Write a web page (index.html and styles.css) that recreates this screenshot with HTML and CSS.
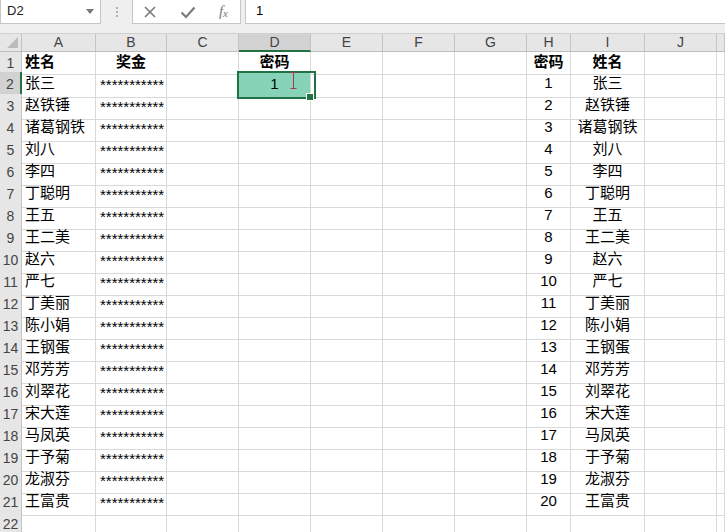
FILE: index.html
```html
<!DOCTYPE html>
<html>
	<head>
		<meta charset="UTF-8">
		<link rel="stylesheet" href="styles.css">
		<title>密码</title>
	</head>
	<body>
		<div class="topbar">
			<div class="formulabar">
				<div class="namebox">D2<span class="caret"></span></div>
				<div class="grip"><span></span><span></span><span></span></div>
				<div class="iconbox">
					<svg class="icon" width="14" height="14" viewBox="0 0 14 14"><path d="M2 2 L12 12 M12 2 L2 12" stroke="#7a7a7a" stroke-width="1.6" fill="none"/></svg>
					<svg class="icon" width="16" height="14" viewBox="0 0 16 14"><path d="M1.5 7.5 L6 12 L14.5 2.5" stroke="#7a7a7a" stroke-width="2.2" fill="none"/></svg>
					<span class="fx">f<sub>x</sub></span>
				</div>
				<div class="input">1</div>
			</div>
		</div>

		<div class="sheet">
			<div class="row head">
				<span class="corner"></span><span>A</span><span>B</span><span>C</span><span class="selcol">D</span><span>E</span><span>F</span><span>G</span><span>H</span><span>I</span><span>J</span><span></span>
			</div>
			<div class="row first">
				<span class="rh">1</span><span class="b">姓名</span><span class="b ctr">奖金</span><span></span><span class="b ctr">密码</span><span></span><span></span><span></span><span class="b ctr">密码</span><span class="b ctr">姓名</span><span></span><span></span>
			</div>
			<div class="row">
				<span class="rh selrow">2</span><span>张三</span><span class="stars">***********</span><span></span><span class="sel ctr">1<svg class="ibeam" width="7" height="17" viewBox="0 0 7 17"><path d="M0.5 0.5 H6.5 M3.5 0.5 V16.5 M0.5 16.5 H6.5" stroke="#a4385a" stroke-width="1" fill="none"/></svg></span><span></span><span></span><span></span><span class="ctr">1</span><span class="ctr">张三</span><span></span><span></span>
			</div>
			<div class="row"><span class="rh">3</span><span>赵铁锤</span><span class="stars">***********</span><span></span><span></span><span></span><span></span><span></span><span class="ctr">2</span><span class="ctr">赵铁锤</span><span></span><span></span></div>
			<div class="row"><span class="rh">4</span><span>诸葛钢铁</span><span class="stars">***********</span><span></span><span></span><span></span><span></span><span></span><span class="ctr">3</span><span class="ctr">诸葛钢铁</span><span></span><span></span></div>
			<div class="row"><span class="rh">5</span><span>刘八</span><span class="stars">***********</span><span></span><span></span><span></span><span></span><span></span><span class="ctr">4</span><span class="ctr">刘八</span><span></span><span></span></div>
			<div class="row"><span class="rh">6</span><span>李四</span><span class="stars">***********</span><span></span><span></span><span></span><span></span><span></span><span class="ctr">5</span><span class="ctr">李四</span><span></span><span></span></div>
			<div class="row"><span class="rh">7</span><span>丁聪明</span><span class="stars">***********</span><span></span><span></span><span></span><span></span><span></span><span class="ctr">6</span><span class="ctr">丁聪明</span><span></span><span></span></div>
			<div class="row"><span class="rh">8</span><span>王五</span><span class="stars">***********</span><span></span><span></span><span></span><span></span><span></span><span class="ctr">7</span><span class="ctr">王五</span><span></span><span></span></div>
			<div class="row"><span class="rh">9</span><span>王二美</span><span class="stars">***********</span><span></span><span></span><span></span><span></span><span></span><span class="ctr">8</span><span class="ctr">王二美</span><span></span><span></span></div>
			<div class="row"><span class="rh">10</span><span>赵六</span><span class="stars">***********</span><span></span><span></span><span></span><span></span><span></span><span class="ctr">9</span><span class="ctr">赵六</span><span></span><span></span></div>
			<div class="row"><span class="rh">11</span><span>严七</span><span class="stars">***********</span><span></span><span></span><span></span><span></span><span></span><span class="ctr">10</span><span class="ctr">严七</span><span></span><span></span></div>
			<div class="row"><span class="rh">12</span><span>丁美丽</span><span class="stars">***********</span><span></span><span></span><span></span><span></span><span></span><span class="ctr">11</span><span class="ctr">丁美丽</span><span></span><span></span></div>
			<div class="row"><span class="rh">13</span><span>陈小娟</span><span class="stars">***********</span><span></span><span></span><span></span><span></span><span></span><span class="ctr">12</span><span class="ctr">陈小娟</span><span></span><span></span></div>
			<div class="row"><span class="rh">14</span><span>王钢蛋</span><span class="stars">***********</span><span></span><span></span><span></span><span></span><span></span><span class="ctr">13</span><span class="ctr">王钢蛋</span><span></span><span></span></div>
			<div class="row"><span class="rh">15</span><span>邓芳芳</span><span class="stars">***********</span><span></span><span></span><span></span><span></span><span></span><span class="ctr">14</span><span class="ctr">邓芳芳</span><span></span><span></span></div>
			<div class="row"><span class="rh">16</span><span>刘翠花</span><span class="stars">***********</span><span></span><span></span><span></span><span></span><span></span><span class="ctr">15</span><span class="ctr">刘翠花</span><span></span><span></span></div>
			<div class="row"><span class="rh">17</span><span>宋大莲</span><span class="stars">***********</span><span></span><span></span><span></span><span></span><span></span><span class="ctr">16</span><span class="ctr">宋大莲</span><span></span><span></span></div>
			<div class="row"><span class="rh">18</span><span>马凤英</span><span class="stars">***********</span><span></span><span></span><span></span><span></span><span></span><span class="ctr">17</span><span class="ctr">马凤英</span><span></span><span></span></div>
			<div class="row"><span class="rh">19</span><span>于予菊</span><span class="stars">***********</span><span></span><span></span><span></span><span></span><span></span><span class="ctr">18</span><span class="ctr">于予菊</span><span></span><span></span></div>
			<div class="row"><span class="rh">20</span><span>龙淑芬</span><span class="stars">***********</span><span></span><span></span><span></span><span></span><span></span><span class="ctr">19</span><span class="ctr">龙淑芬</span><span></span><span></span></div>
			<div class="row"><span class="rh">21</span><span>王富贵</span><span class="stars">***********</span><span></span><span></span><span></span><span></span><span></span><span class="ctr">20</span><span class="ctr">王富贵</span><span></span><span></span></div>
			<div class="row"><span class="rh">22</span><span></span><span></span><span></span><span></span><span></span><span></span><span></span><span></span><span></span><span></span><span></span></div>
		</div>
	</body>
</html>
```

FILE: styles.css
```css
* {
	box-sizing: border-box;
	font-family: "Liberation Sans", "Noto Sans CJK SC", sans-serif
}

body {
	margin: 0;
	width: 725px;
	height: 532px;
	overflow: hidden;
	background: white;
	color: #000;
}

.topbar {
	height: 34px;
	background: #efefef;
	border-bottom: 1px solid #cfcfcf;
}

.formulabar {
	display: flex;
	height: 24px;
}

.namebox {
	width: 101px;
	background: white;
	border: 1px solid #c6c6c6;
	border-top: 0;
	font-size: 13px;
	line-height: 22px;
	padding-left: 6px;
	color: #222;
	position: relative;
}

.caret {
	position: absolute;
	right: 6px;
	top: 9px;
	border-left: 4px solid transparent;
	border-right: 4px solid transparent;
	border-top: 5px solid #777;
}

.grip {
	width: 31px;
	display: flex;
	flex-direction: column;
	align-items: center;
	justify-content: center;
	gap: 2px;
}

.grip span {
	width: 2px;
	height: 2px;
	background: #b4b4b4;
}

.iconbox {
	width: 109px;
	background: white;
	border: 1px solid #c6c6c6;
	border-top: 0;
	display: flex;
	align-items: center;
	justify-content: space-between;
	padding: 0 12px 0 10px;
}

.fx {
	font-family: "Liberation Serif", serif;
	font-style: italic;
	font-size: 15px;
	color: #7a7a7a;
	line-height: 1;
}

.fx sub {
	font-family: "Liberation Serif", serif;
	font-size: 11px;
	vertical-align: -1px;
}

.input {
	flex: 1;
	margin-left: 4px;
	background: white;
	border: 1px solid #c6c6c6;
	border-top: 0;
	border-right: 0;
	font-size: 13px;
	line-height: 22px;
	padding-left: 10px;
}

.row {
	display: grid;
	grid-template-columns: 22px 74px 71px 72px 72px 72px 72px 72px 44px 74px 72px 1fr;
	height: 22px;
}

.row span {
	display: block;
	border-right: 1px solid #d9d9d9;
	border-bottom: 1px solid #d9d9d9;
	font-size: 15px;
	line-height: 21px;
	padding: 0 3px;
	white-space: nowrap;
	overflow: visible;
}

.row.head {
	height: 18px;
	background: #e6e6e6;
}

.row.head span {
	border-right-color: #c4c4c4;
	border-bottom-color: #bdbdbd;
	font-size: 14px;
	line-height: 17px;
	text-align: center;
	color: #444;
}

.row.head .corner {
	position: relative;
}

.corner::after {
	content: "";
	position: absolute;
	right: 3px;
	bottom: 3px;
	border-left: 11px solid transparent;
	border-bottom: 11px solid #bcbcbc;
}

.row.head .selcol {
	background: #d2d2d2;
	border-bottom: 2px solid #217346;
	line-height: 16px;
}

.row.first {
	height: 20px;
}

.row.first span {
	line-height: 19px;
}

.row .rh {
	background: #e6e6e6;
	border-right-color: #c4c4c4;
	border-bottom-color: #c4c4c4;
	color: #444;
	font-size: 14px;
	text-align: center;
	line-height: 25px;
	padding: 0;
}

.row.first .rh {
	line-height: 22px;
}

.row .selrow {
	background: #d2d2d2;
	border-right: 2px solid #217346;
}

.b {
	font-weight: bold;
}

.ctr {
	text-align: center;
}

.row .stars {
	padding-left: 4px;
	line-height: 25px;
	letter-spacing: 0;
}

.row .sel {
	position: relative;
	background: #86d3b7;
	line-height: 23px;
}

.sel::after {
	content: "";
	position: absolute;
	left: -2px;
	top: -1px;
	width: 75px;
	height: 24px;
	border: 2px solid #217346;
}

.sel::before {
	content: "";
	position: absolute;
	right: -4px;
	bottom: -4px;
	width: 6px;
	height: 6px;
	background: #217346;
	border: 1px solid white;
	z-index: 2;
}

.ibeam {
	position: absolute;
	display: block;
	left: 51px;
	top: 0;
	z-index: 3;
}
```
